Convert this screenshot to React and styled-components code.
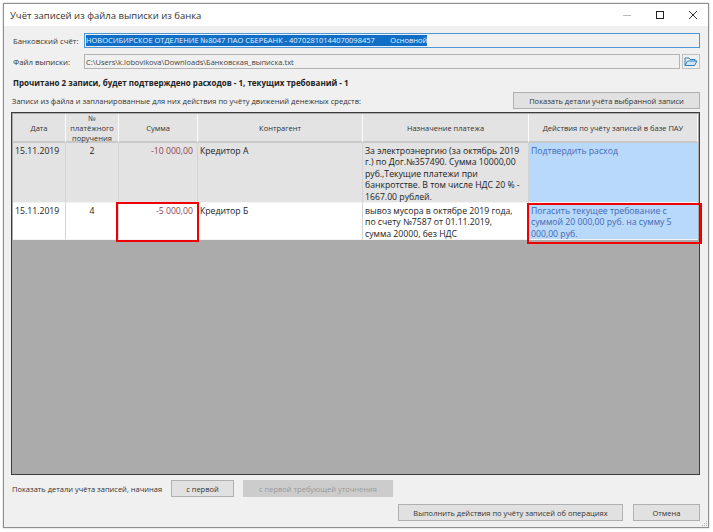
import React from 'react'
import styled, { createGlobalStyle } from 'styled-components'

const GlobalStyle = createGlobalStyle`
  html, body { margin: 0; padding: 0; background: #fff; }
  body { width: 713px; height: 532px; overflow: hidden; font-family: "Open Sans", "Liberation Sans", sans-serif; }
`

const Page = styled.div`
  position: relative;
  width: 713px;
  height: 532px;
  padding: 3px 4px 4px 3px;
  box-sizing: border-box;
`

const Window = styled.div`
  height: 100%;
  box-sizing: border-box;
  border: 1px solid #8f8f8f;
  display: flex;
  flex-direction: column;
  background: #f0f0f0;
  color: #222;
  box-shadow: 0 0 2px rgba(0, 0, 0, 0.25);
`

const TitleBar = styled.div`
  height: 22px;
  flex: none;
  background: #fff;
  display: flex;
  align-items: center;
  justify-content: space-between;
  padding-left: 6px;
  font-size: 9.5px;
  color: #333;
`

const WindowControls = styled.div`
  display: flex;
  align-items: center;
  gap: 23px;
  padding-right: 10px;
  color: #333;
`

const Body = styled.div`
  flex: 1;
  display: flex;
  flex-direction: column;
  padding: 7px 8px 0 7px;
  min-height: 0;
`

const FieldRow = styled.div`
  display: flex;
  align-items: center;
  gap: 2px;
  margin-bottom: 6px;
`

const FieldLabel = styled.label`
  width: 71px;
  flex: none;
  padding-left: 2px;
  box-sizing: border-box;
  font-size: 7.8px;
  color: #333;
`

const Field = styled.div`
  flex: 1;
  height: 15px;
  box-sizing: border-box;
  padding: 0 1px;
  display: flex;
  align-items: center;
  font-size: 7.5px;
  white-space: pre;
  color: #444;
  background: #f0f0f0;
  border: 1px solid ${p => (p.$focused ? '#4a98d8' : '#b4b4b4')};
`

const Selected = styled.span`
  background: #0f6fc6;
  color: #e6f1fb;
  line-height: 11px;
`

const BrowseButton = styled.button`
  width: 18px;
  height: 15px;
  padding: 0;
  flex: none;
  display: flex;
  align-items: center;
  justify-content: center;
  background: #f0f0f0;
  border: 1px solid #c0c0c0;
`

const Summary = styled.div`
  margin-top: 2px;
  padding-left: 2px;
  font-size: 8px;
  font-weight: 700;
  color: #222;
  height: 12px;
  line-height: 12px;
`

const TableCaption = styled.div`
  display: flex;
  align-items: center;
  justify-content: space-between;
  height: 17px;
  margin-top: 3px;
  padding-left: 1px;
  font-size: 7.55px;
  color: #333;
`

const Button = styled.button`
  height: ${p => p.$height || 17}px;
  width: ${p => p.$width}px;
  padding: 0;
  flex: none;
  box-sizing: border-box;
  font-family: inherit;
  font-size: 7.5px;
  color: ${p => (p.disabled ? '#9a9a9a' : '#333')};
  background: ${p => (p.disabled ? '#cccccc' : '#e1e1e1')};
  border: 1px solid ${p => (p.disabled ? '#cccccc' : '#b0b0b0')};
`

const Table = styled.div`
  flex: none;
  height: 363px;
  margin-top: 3px;
  box-sizing: border-box;
  border: 1px solid #3c3c3c;
  padding: 1px;
  background: #ababab;
`

const Rows = styled.div`
  display: grid;
  grid-template-columns: 53px 53px 79px 165px 166px 1fr;
  grid-template-rows: 29px 60px 37px;
  background: #fff;
  column-gap: 0;
`

const HeadCell = styled.div`
  display: flex;
  align-items: center;
  justify-content: center;
  text-align: center;
  white-space: pre-line;
  box-sizing: border-box;
  font-size: 7.5px;
  line-height: 10px;
  color: #333;
  background: #e3e3e3;
  border-right: 1px solid #fafafa;
  border-bottom: 2px solid #c8c8c8;
`

const Cell = styled.div`
  box-sizing: border-box;
  padding: 3px ${p => p.$padRight || 2}px 0 2px;
  font-size: 8.7px;
  line-height: 11.4px;
  white-space: pre-line;
  overflow: hidden;
  text-align: ${p => p.$align || 'left'};
  color: ${p => p.$color || '#222'};
  background: ${p => p.$bg};
  border-right: 1px solid #d4d4d4;
  border-bottom: 1px solid #f4f4f4;
`

const Footer = styled.div`
  display: flex;
  align-items: center;
  margin-top: 5px;
  padding-left: 1px;
  font-size: 7.5px;
  color: #333;
`

const FooterLabel = styled.span`
  width: 159px;
  flex: none;
`

const FooterGap = styled.span`
  width: 9px;
  flex: none;
`

const Actions = styled.div`
  display: flex;
  justify-content: flex-end;
  gap: 10px;
  margin-top: 7px;
`

const RedFrame = styled.div`
  position: absolute;
  box-sizing: border-box;
  border: 2px solid #ee0000;
  left: ${p => p.$x}px;
  top: ${p => p.$y}px;
  width: ${p => p.$w}px;
  height: ${p => p.$h}px;
`

const ResizeGrip = styled.svg`
  position: absolute;
  right: 5px;
  bottom: 5px;
`

const headers = ['Дата', '№\nплатёжного\nпоручения', 'Сумма', 'Контрагент', 'Назначение платежа', 'Действия по учёту записей в базе ПАУ']

const rows = [
  {
    date: '15.11.2019', num: '2', sum: '-10 000,00', party: 'Кредитор А',
    purpose: 'За электроэнергию (за октябрь 2019 г.) по Дог.№357490. Сумма 10000,00 руб.,Текущие платежи при банкротстве. В том числе НДС 20 % - 1667.00 рублей.',
    action: 'Подтвердить расход', bg: '#e3e3e3',
  },
  {
    date: '15.11.2019', num: '4', sum: '-5 000,00', party: 'Кредитор Б',
    purpose: 'вывоз мусора в октябре 2019 года,\nпо счету №7587 от 01.11.2019,\nсумма 20000, без НДС',
    action: 'Погасить текущее требование с суммой 20 000,00 руб. на сумму 5 000,00 руб.', bg: '#fff',
  },
]

const App = () => (
  <Page>
    <GlobalStyle />
    <Window>
      <TitleBar>
        Учёт записей из файла выписки из банка
        <WindowControls>
          <svg width="10" height="10" viewBox="0 0 10 10"><path d="M1 5.5h8" stroke="#bbb" fill="none" /></svg>
          <svg width="10" height="10" viewBox="0 0 10 10"><rect x="1.5" y="1.5" width="7" height="7" stroke="#222" fill="none" /></svg>
          <svg width="10" height="10" viewBox="0 0 10 10"><path d="M1 1l8 8M9 1l-8 8" stroke="#333" fill="none" /></svg>
        </WindowControls>
      </TitleBar>
      <Body>
        <FieldRow>
          <FieldLabel>Банковский счёт:</FieldLabel>
          <Field $focused>
            <Selected>{'НОВОСИБИРСКОЕ ОТДЕЛЕНИЕ №8047 ПАО СБЕРБАНК - 40702810144070098457        Основной'}</Selected>
          </Field>
        </FieldRow>
        <FieldRow>
          <FieldLabel>Файл выписки:</FieldLabel>
          <Field>C:\Users\k.lobovikova\Downloads\Банковская_выписка.txt</Field>
          <BrowseButton aria-label="Обзор">
            <svg width="14" height="11" viewBox="0 0 14 11">
              <path d="M1 9.5V2h4l1 1.5h5V5" fill="none" stroke="#2f7fb8" />
              <path d="M1 9.5L3.5 5H13l-2.5 4.5z" fill="#cfe6f5" stroke="#2f7fb8" />
            </svg>
          </BrowseButton>
        </FieldRow>
        <Summary>Прочитано 2 записи, будет подтверждено расходов - 1, текущих требований - 1</Summary>
        <TableCaption>
          Записи из файла и запланированные для них действия по учёту движений денежных средств:
          <Button $width={187}>Показать детали учёта выбранной записи</Button>
        </TableCaption>
        <Table>
          <Rows>
            {headers.map(h => (
              <HeadCell key={h}>{h}</HeadCell>
            ))}
            {rows.map(r => (
              <React.Fragment key={r.num}>
                <Cell $bg={r.bg}>{r.date}</Cell>
                <Cell $bg={r.bg} $align="center">{r.num}</Cell>
                <Cell $bg={r.bg} $align="right" $color="#8f3f4f" $padRight={4}>{r.sum}</Cell>
                <Cell $bg={r.bg}>{r.party}</Cell>
                <Cell $bg={r.bg} $padRight={7}>{r.purpose}</Cell>
                <Cell $bg="#b9d9fb" $color="#3f68b5" $padRight={6}>{r.action}</Cell>
              </React.Fragment>
            ))}
          </Rows>
        </Table>
        <Footer>
          <FooterLabel>Показать детали учёта записей, начиная</FooterLabel>
          <Button $width={63}>с первой</Button>
          <FooterGap />
          <Button $width={150} disabled>с первой требующей уточнения</Button>
        </Footer>
        <Actions>
          <Button $width={225}>Выполнить действия по учёту записей об операциях</Button>
          <Button $width={67}>Отмена</Button>
        </Actions>
      </Body>
    </Window>
    <RedFrame $x={116} $y={202} $w={83} $h={40} />
    <RedFrame $x={527} $y={203} $w={175} $h={41} />
    <ResizeGrip width="6" height="6" viewBox="0 0 6 6">
      <path d="M4 0h1v1H4zM2 2h1v1H2zM4 2h1v1H4zM0 4h1v1H0zM2 4h1v1H2zM4 4h1v1H4z" fill="#b5b5b5" />
    </ResizeGrip>
  </Page>
)

export default App
